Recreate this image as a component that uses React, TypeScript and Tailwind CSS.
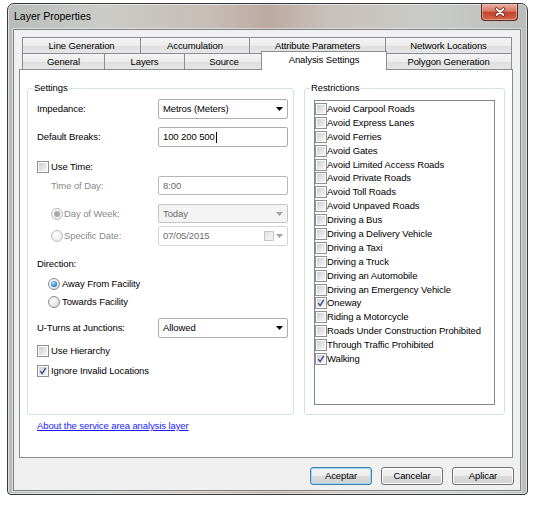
import React from 'react';

const restrictions: [string, boolean][] = [
  ['Avoid Carpool Roads', false],
  ['Avoid Express Lanes', false],
  ['Avoid Ferries', false],
  ['Avoid Gates', false],
  ['Avoid Limited Access Roads', false],
  ['Avoid Private Roads', false],
  ['Avoid Toll Roads', false],
  ['Avoid Unpaved Roads', false],
  ['Driving a Bus', false],
  ['Driving a Delivery Vehicle', false],
  ['Driving a Taxi', false],
  ['Driving a Truck', false],
  ['Driving an Automobile', false],
  ['Driving an Emergency Vehicle', false],
  ['Oneway', true],
  ['Riding a Motorcycle', false],
  ['Roads Under Construction Prohibited', false],
  ['Through Traffic Prohibited', false],
  ['Walking', true],
];

const Arrow: React.FC<{ muted?: boolean }> = ({ muted }) => (
  <svg width="7" height="4" viewBox="0 0 7 4" className="shrink-0">
    <path d="M0 0H7L3.5 4Z" fill={muted ? '#a4a4a4' : '#000'} />
  </svg>
);

const CheckBox: React.FC<{ checked?: boolean; className?: string }> = ({ checked, className = '' }) => (
  <span className={`relative inline-flex h-[12px] w-[12px] shrink-0 border border-[#8e8f8f] bg-white p-[1px] ${className}`}>
    <span className="block h-full w-full bg-[linear-gradient(135deg,#cbced4_0%,#e4e5e8_55%,#f7f7f7_100%)]" />
    {checked && (
      <svg className="absolute left-0 top-0" width="10" height="10" viewBox="0 0 10 10">
        <path d="M2.2 5.2 L4.1 7.6 L7.8 1.8" fill="none" stroke="#2b4787" strokeWidth="1.3" />
      </svg>
    )}
  </span>
);

const Radio: React.FC<{ checked?: boolean; disabled?: boolean }> = ({ checked, disabled }) => (
  <span
    className={`inline-flex h-[12px] w-[12px] shrink-0 items-center justify-center rounded-full border ${
      disabled
        ? 'border-[#bcbcbc] bg-[radial-gradient(circle_at_35%_35%,#ffffff_0%,#ececec_70%,#dadada_100%)]'
        : 'border-[#8a8c8f] bg-[radial-gradient(circle_at_35%_35%,#ffffff_0%,#e2e4e7_65%,#c6c9ce_100%)]'
    }`}
  >
    {checked && (
      <span
        className={`h-[6px] w-[6px] rounded-full ${
          disabled ? 'bg-[#a9a9a9]' : 'bg-[radial-gradient(circle_at_40%_35%,#b6e6ff_0%,#2d8fd8_55%,#0d4a88_100%)]'
        }`}
      />
    )}
  </span>
);

const Combo: React.FC<{ value: string; disabled?: boolean; h?: string }> = ({ value, disabled, h = 'h-[20px]' }) => (
  <div
    className={`flex ${h} w-[130px] items-center justify-between rounded-[2px] border pl-[4px] pr-[4px] ${
      disabled ? 'border-[#c2c5c9] bg-[#f4f4f4] text-[#6d6d6d]' : 'border-[#abadb3] bg-white'
    }`}
  >
    <span>{value}</span>
    <Arrow muted={disabled} />
  </div>
);

const Tab: React.FC<{ label: string; w: string; last?: boolean }> = ({ label, w, last }) => (
  <div
    className={`flex h-full ${w} items-center justify-center border-l border-t border-[#898c95] bg-[linear-gradient(180deg,#f4f4f4_0%,#ececec_50%,#dfdfdf_51%,#e6e6e6_100%)] ${
      last ? 'border-r' : ''
    }`}
  >
    {label}
  </div>
);

const Button: React.FC<{ label: string; primary?: boolean }> = ({ label, primary }) => (
  <div
    className={`flex h-[18px] w-[62px] items-center justify-center rounded-[3px] border bg-[linear-gradient(180deg,#f4f4f4_0%,#ebebeb_48%,#dcdcdc_52%,#d0d0d0_100%)] ${
      primary ? 'border-[#3c7fb1] shadow-[inset_0_0_0_1px_#9fd8f5]' : 'border-[#707070] shadow-[inset_0_0_0_1px_#fbfbfb]'
    }`}
  >
    {label}
  </div>
);

export default function App() {
  return (
    <div className="min-h-screen bg-white pl-[7px] pt-[3px] font-['Liberation_Sans',Arial,sans-serif] text-[9.5px] leading-[12px] tracking-[-0.1px] text-black">
      <div className="flex h-[492px] w-[521px] flex-col rounded-t-[7px] rounded-b-[4px] border border-[#383b3e] bg-[linear-gradient(90deg,#b8bcb9_0%,#cbccc8_18%,#c6bcb5_40%,#bcaaa2_50%,#c8c1bb_62%,#c9cbc8_82%,#babdba_100%)] shadow-[inset_0_0_0_1px_rgba(255,255,255,0.55)]">
        {/* title bar */}
        <div className="flex h-[25px] items-start justify-between pl-[6px] pr-[9px]">
          <span className="mt-[6px] text-[10.5px] tracking-normal">Layer Properties</span>
          <div className="flex h-[17px] w-[37px] items-center justify-center rounded-b-[4px] border border-t-0 border-[#5c2a22] bg-[linear-gradient(180deg,#eab0a3_0%,#d77664_45%,#c3432e_52%,#d2654a_100%)] shadow-[inset_0_0_0_1px_rgba(255,215,205,0.45)]">
            <svg width="12" height="10" viewBox="0 0 12 10">
              <path d="M2.5 2 L9.5 8 M9.5 2 L2.5 8" stroke="#5a1c14" strokeWidth="3.4" strokeLinecap="round" />
              <path d="M2.5 2 L9.5 8 M9.5 2 L2.5 8" stroke="#fff" strokeWidth="1.9" strokeLinecap="round" />
            </svg>
          </div>
        </div>

        {/* client area */}
        <div className="mb-[3px] ml-[5px] mr-[6px] flex flex-1 flex-col border border-[#7e8286] bg-[#f0f0f0] shadow-[0_0_0_1px_rgba(255,255,255,0.45)]">
          <div className="ml-[5px] mt-[7px] w-[494px]">
            {/* tab rows */}
            <div className="flex h-[16px] pl-[3px]">
              <Tab label="Line Generation" w="w-[118px]" />
              <Tab label="Accumulation" w="w-[109px]" />
              <Tab label="Attribute Parameters" w="w-[136px]" />
              <Tab label="Network Locations" w="w-[127px]" last />
            </div>
            <div className="flex h-[16px] items-end pl-[3px]">
              <Tab label="General" w="w-[82px]" />
              <Tab label="Layers" w="w-[80px]" />
              <Tab label="Source" w="w-[79px]" />
              <div className="relative z-10 -mx-[2px] -mb-[1px] flex h-[19px] w-[126px] shrink-0 items-start justify-center border border-b-0 border-[#898c95] bg-white pt-[2px]">
                Analysis Settings
              </div>
              <Tab label="Polygon Generation" w="w-[127px]" last />
            </div>

            {/* panel */}
            <div className="flex h-[389px] flex-col border border-[#898c95] bg-white">
              <div className="ml-[7px] mt-[12px] flex gap-[10px]">
                <fieldset className="h-[333px] w-[267px] rounded-[3px] border border-[#d5dfe5] pl-[9px] pr-[5px]">
                  <legend className="-ml-[4px] px-[1px] leading-[12px]">Settings</legend>

                  <div className="mt-[5px] flex h-[20px] items-center">
                    <span className="w-[121px]">Impedance:</span>
                    <Combo value="Metros (Meters)" />
                  </div>

                  <div className="mt-[8px] flex h-[20px] items-center">
                    <span className="w-[121px]">Default Breaks:</span>
                    <div className="flex h-[20px] w-[130px] items-center rounded-[2px] border border-[#abadb3] bg-white pl-[4px]">
                      <span>100 200 500</span>
                      <span className="ml-[1px] h-[11px] w-px bg-black" />
                    </div>
                  </div>

                  <div className="mt-[13px] flex h-[13px] items-center">
                    <CheckBox />
                    <span className="ml-[2px]">Use Time:</span>
                  </div>

                  <div className="mt-[3px] flex h-[19px] items-center text-[#8a8a8a]">
                    <span className="w-[121px] pl-[14px]">Time of Day:</span>
                    <div className="flex h-[19px] w-[130px] items-center rounded-[2px] border border-[#b5b8bd] bg-white pl-[4px] text-[#6d6d6d]">
                      8:00
                    </div>
                  </div>

                  <div className="mt-[9px] flex h-[19px] items-center text-[#8a8a8a]">
                    <div className="flex w-[121px] items-center pl-[14px]">
                      <Radio checked disabled />
                      <span className="ml-[1px]">Day of Week:</span>
                    </div>
                    <Combo value="Today" disabled h="h-[19px]" />
                  </div>

                  <div className="mt-[3px] flex h-[20px] items-center text-[#8a8a8a]">
                    <div className="flex w-[121px] items-center pl-[14px]">
                      <Radio disabled />
                      <span className="ml-[1px]">Specific Date:</span>
                    </div>
                    <div className="flex h-[20px] w-[130px] items-center justify-between rounded-[2px] border border-[#d3d6da] bg-white pl-[4px] pr-[4px] text-[#6d6d6d]">
                      <span>07/05/2015</span>
                      <div className="flex items-center gap-[2px]">
                        <span className="h-[10px] w-[10px] rounded-[1px] border border-[#c3c3c3] bg-[linear-gradient(135deg,#e3e3e3_0%,#f7f7f7_100%)]" />
                        <Arrow muted />
                      </div>
                    </div>
                  </div>

                  <div className="mt-[11px] flex h-[13px] items-center">Direction:</div>

                  <div className="mt-[7px] flex h-[13px] items-center pl-[11px]">
                    <Radio checked />
                    <span className="ml-[2px]">Away From Facility</span>
                  </div>

                  <div className="mt-[5px] flex h-[13px] items-center pl-[11px]">
                    <Radio />
                    <span className="ml-[2px]">Towards Facility</span>
                  </div>

                  <div className="mt-[10px] flex h-[20px] items-center">
                    <span className="w-[121px]">U-Turns at Junctions:</span>
                    <Combo value="Allowed" />
                  </div>

                  <div className="mt-[6px] flex h-[13px] items-center">
                    <CheckBox />
                    <span className="ml-[2px]">Use Hierarchy</span>
                  </div>

                  <div className="mt-[7px] flex h-[13px] items-center">
                    <CheckBox checked />
                    <span className="ml-[2px]">Ignore Invalid Locations</span>
                  </div>
                </fieldset>

                <fieldset className="h-[333px] w-[201px] rounded-[3px] border border-[#d5dfe5] pl-[9px] pr-[9px]">
                  <legend className="-ml-[4px] px-[1px] leading-[12px]">Restrictions</legend>
                  <div className="mt-[6px] h-[305px] border border-[#828790] bg-white pt-[1px]">
                    {restrictions.map(([name, on]) => (
                      <div key={name} className="flex h-[13.9px] items-center whitespace-nowrap">
                        <CheckBox checked={on} />
                        <span>{name}</span>
                      </div>
                    ))}
                  </div>
                </fieldset>
              </div>

              <a className="ml-[17px] mt-[5px] self-start text-[#1a1aff] underline">
                About the service area analysis layer
              </a>
            </div>
          </div>

          {/* buttons */}
          <div className="mt-[9px] flex justify-end gap-[9px] pr-[6px]">
            <Button label="Aceptar" primary />
            <Button label="Cancelar" />
            <Button label="Aplicar" />
          </div>
        </div>
      </div>
    </div>
  );
}
